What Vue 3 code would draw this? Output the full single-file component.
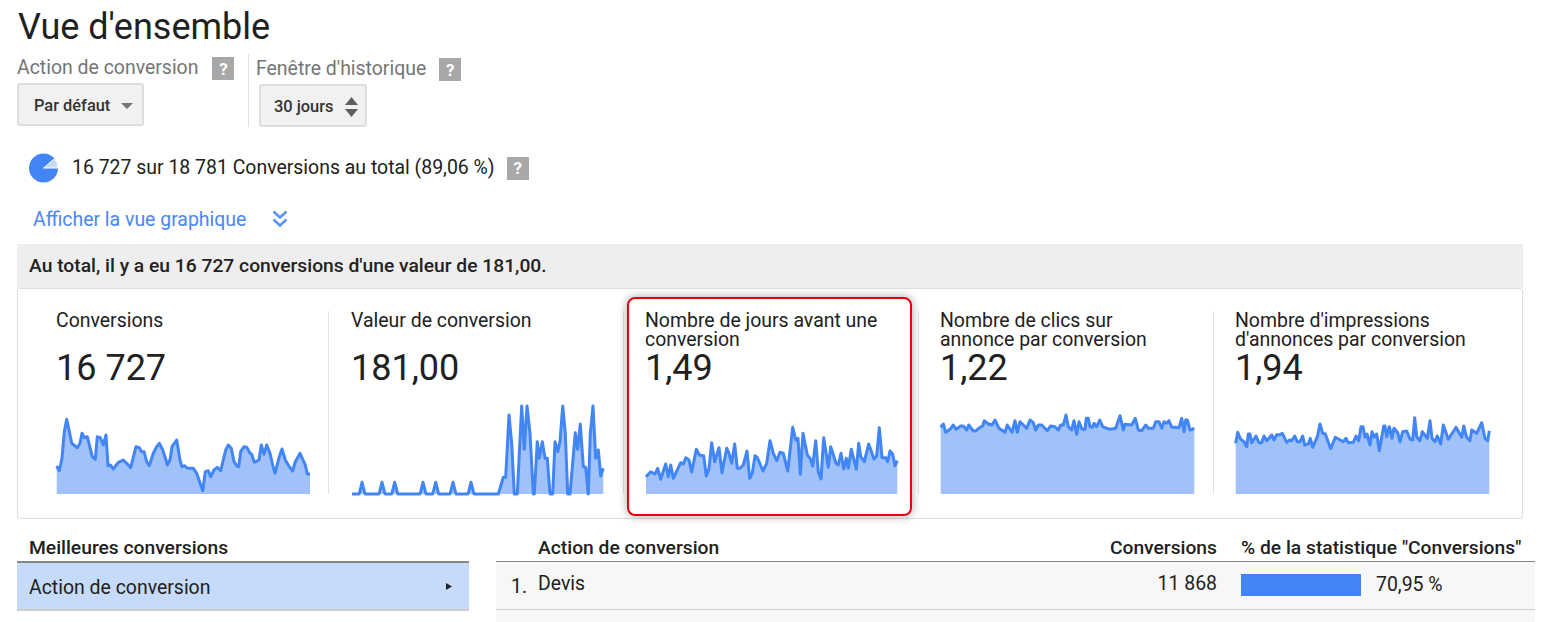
<script setup>
const raw = [
  { title: 'Conversions', value: '16 727', off: 20, left: 56,
    p: [110,198,118,212,126,175,133,95,140,58,147,90,155,130,172,143,180,130,186,100,193,113,202,110,217,170,226,178,232,110,241,113,250,135,258,105,264,197,271,195,280,207,295,187,310,180,320,190,332,203,348,140,358,143,365,155,372,155,380,185,388,197,400,160,410,140,418,130,428,150,438,180,442,195,450,180,456,140,470,120,480,180,486,200,494,197,502,205,520,205,530,220,548,272,556,215,565,212,572,230,582,210,592,202,602,212,617,150,625,135,634,145,642,185,650,197,656,200,662,155,672,140,680,142,690,160,695,163,703,187,717,180,724,135,732,163,740,135,750,160,758,195,765,220,778,170,786,147,796,180,808,200,818,213,826,185,840,160,856,195,862,222,870,222] },
  { title: 'Valeur de conversion', value: '181,00', off: 330, left: 351,
    p: [66,282,88,282,96,247,105,282,147,282,156,247,165,282,185,282,194,247,203,282,270,282,279,247,288,282,308,282,317,247,326,282,360,282,369,247,378,282,414,282,423,247,432,282,505,282,520,232,527,232,537,45,545,130,553,282,562,282,575,18,583,148,591,18,600,100,610,282,613,282,622,125,628,175,637,125,645,175,652,175,660,282,668,282,675,125,683,155,690,125,698,18,706,100,713,282,720,282,736,98,743,148,751,72,760,200,767,202,775,282,781,100,789,18,797,175,805,150,812,228,820,205] },
  { title: 'Nombre de jours avant une conversion', value: '1,49', off: 620, left: 646, top: 290, highlight: true,
    p: [78,560,92,545,105,552,113,535,122,568,137,522,145,560,152,525,160,565,182,518,190,522,197,503,207,510,215,546,229,478,238,495,251,498,259,558,267,535,275,458,284,515,297,473,306,548,320,475,327,490,335,520,344,462,352,535,360,535,370,525,381,483,389,565,397,550,405,497,412,503,429,543,440,520,450,452,460,490,470,512,480,487,490,490,503,543,518,412,527,450,534,445,541,553,549,430,562,495,570,505,578,528,587,452,595,545,603,567,611,443,625,532,632,470,648,520,655,525,663,490,671,537,679,505,685,535,694,478,709,538,716,460,722,500,733,515,746,462,762,507,770,497,778,413,786,503,797,503,803,515,810,483,818,493,825,527,832,512] },
  { title: 'Nombre de clics sur annonce par conversion', value: '1,22', off: 930, left: 941,
    p: [32,82,40,72,47,97,60,88,70,75,78,88,92,78,100,78,110,90,116,75,130,93,138,92,150,82,158,78,163,62,175,72,186,75,195,60,207,85,225,97,232,75,246,97,255,62,262,97,270,65,290,85,300,60,310,68,317,90,325,75,335,75,352,92,362,78,375,80,385,90,392,75,400,75,408,45,415,80,425,90,432,62,440,103,447,65,456,88,465,88,469,55,475,55,480,80,487,82,492,70,500,80,509,60,518,80,530,85,540,88,557,85,570,47,580,90,585,73,605,75,616,55,625,90,635,92,647,75,655,85,670,85,677,65,687,65,695,85,702,65,710,70,717,62,725,82,735,82,747,83,755,55,762,95,767,60,772,60,780,90,793,85] },
  { title: "Nombre d'impressions d'annonces par conversion", value: '1,94', off: 1220, left: 1236,
    p: [47,130,53,97,62,118,72,125,80,140,85,102,90,102,95,128,108,108,117,128,125,128,132,108,140,122,155,105,162,120,170,104,180,104,187,100,200,127,208,120,215,122,224,108,232,125,240,125,248,108,254,135,265,132,271,115,278,142,292,110,300,72,308,100,316,102,332,146,346,112,370,125,378,115,385,128,400,127,408,108,416,122,423,80,429,80,435,112,441,102,450,135,456,95,463,112,470,102,478,152,491,78,495,78,500,110,508,80,516,115,522,85,533,98,540,125,548,95,560,93,570,117,578,120,584,53,590,110,600,122,607,95,622,115,630,62,636,115,645,125,652,108,662,132,670,75,685,118,708,82,725,112,731,78,740,112,750,122,755,90,770,100,785,68,795,115,803,122,808,92] }
]

const cards = raw.map((c) => {
  const pts = []
  const top = c.top ?? 400
  for (let i = 0; i < c.p.length; i += 2) {
    const x = c.off + c.p[i] / 3 - c.left
    const y = top + c.p[i + 1] / 3 - 400
    pts.push([x.toFixed(1), y.toFixed(1)])
  }
  const line = pts.map((q) => q.join(',')).join(' ')
  const area = `${pts[0][0]},94 ${line} ${pts[pts.length - 1][0]},94`
  return { title: c.title, value: c.value, highlight: !!c.highlight, line, area }
})
</script>

<template>
  <main class="page">
    <h1 class="title">Vue d'ensemble</h1>

    <section class="filters">
      <div class="filter first">
        <div class="label-row">
          <span class="label">Action de conversion</span>
          <span class="help">?</span>
        </div>
        <button class="select">
          <span>Par défaut</span>
          <svg class="caret" width="12" height="6" viewBox="0 0 12 6"><path d="M0 0h12L6 6z" fill="#757575" /></svg>
        </button>
      </div>
      <div class="filter second">
        <div class="label-row">
          <span class="label">Fenêtre d'historique</span>
          <span class="help">?</span>
        </div>
        <button class="select select-days">
          <span>30 jours</span>
          <svg class="updown" width="13" height="20" viewBox="0 0 13 20"><path d="M6.5 0L13 8H0zM0 12h13l-6.5 8z" fill="#5f5f5f" /></svg>
        </button>
      </div>
    </section>

    <div class="total">
      <svg width="29" height="30" viewBox="0 0 29 30" class="pie">
        <circle cx="14.5" cy="15" r="14.5" fill="#4285f4" />
        <path d="M14.5 15L29 15A14.5 14.5 0 0 0 25.6 5.6z" fill="#c6daf9" stroke="#fff" stroke-width="1" />
      </svg>
      <span class="total-text">16 727 sur 18 781 Conversions au total (89,06 %)</span>
      <span class="help help-total">?</span>
    </div>

    <div class="graph-link">
      <a>Afficher la vue graphique</a>
      <svg width="16" height="18" viewBox="0 0 16 18" fill="none" stroke="#5b95f5" stroke-width="2.6">
        <path d="M1.5 1.5L8 7.5l6.5-6M1.5 9.5L8 15.5l6.5-6" />
      </svg>
    </div>

    <div class="summary">Au total, il y a eu 16 727 conversions d'une valeur de 181,00.</div>

    <section class="cards">
      <article v-for="c in cards" :key="c.title" class="card">
        <div v-if="c.highlight" class="red-box"></div>
        <div class="card-title">{{ c.title }}</div>
        <div class="card-value">{{ c.value }}</div>
        <svg class="spark" width="270" height="94" viewBox="0 0 270 94">
          <polygon :points="c.area" fill="#a0c2f9" />
          <polyline :points="c.line" fill="none" stroke="#4285f4" stroke-width="3" stroke-linejoin="round" />
        </svg>
      </article>
    </section>

    <section class="bottom">
      <div class="left-panel">
        <div class="head">Meilleures conversions</div>
        <div class="left-row">
          <span class="left-text">Action de conversion</span>
          <svg width="6" height="7" viewBox="0 0 6 7"><path d="M0 0l6 3.5L0 7z" fill="#222" /></svg>
        </div>
      </div>
      <div class="right-panel">
        <div class="table-row head-row">
          <span></span>
          <span>Action de conversion</span>
          <span class="num">Conversions</span>
          <span class="pct-head">% de la statistique "Conversions"</span>
        </div>
        <div class="table-row data-row">
          <span class="rank">1.</span>
          <span class="name">Devis</span>
          <span class="num">11 868</span>
          <span class="pct"><i class="bar"></i>70,95 %</span>
        </div>
        <div class="next-row"></div>
      </div>
    </section>
  </main>
</template>

<style>
html, body { margin: 0; background: #fff; overflow: hidden; }
</style>

<style scoped>
.page {
  width: 1548px;
  height: 622px;
  overflow: hidden;
  padding-left: 17px;
  box-sizing: border-box;
  font-family: Roboto, "Liberation Sans", sans-serif;
  color: #212121;
  font-size: 19.45px;
}
.title {
  margin: 0;
  height: 54px;
  line-height: 54px;
  font-size: 36px;
  font-weight: 400;
  color: #212121;
  padding-left: 1px;
}
.filters {
  display: flex;
  height: 73px;
}
.filter.first {
  width: 231px;
  border-right: 1px solid #e0e0e0;
}
.filter.second {
  padding-left: 7px;
}
.label-row {
  display: flex;
  align-items: center;
  height: 29px;
}
.second .label-row { padding-top: 1px; }
.first .help { margin-left: 14px; }
.label { color: #757575; padding-bottom: 2px; }
.help {
  display: inline-flex;
  align-items: center;
  justify-content: center;
  width: 22px;
  height: 23px;
  background: #a8a8a8;
  color: #fff;
  font-size: 17px;
  font-weight: 700;
  margin-left: 13px;
}
.select {
  display: inline-flex;
  align-items: center;
  height: 43px;
  padding: 2px 9px 0 15px;
  margin: 0;
  border: 2px solid #ddd;
  border-radius: 3px;
  background: #f1f1f1;
  font-family: inherit;
  font-size: 16.4px;
  font-weight: 500;
  color: #333;
  box-sizing: border-box;
  width: 127px;
  justify-content: space-between;
}
.select-days {
  width: 108px;
  margin-left: 3px;
  padding-left: 13px;
  padding-right: 7px;
}
.total {
  display: flex;
  align-items: center;
  height: 30px;
  margin-top: 26px;
  padding-left: 12px;
}
.total-text { padding-bottom: 2px; }
.pie { margin-right: 14px; flex: none; }
.help-total { margin-left: 12px; }
.graph-link {
  display: flex;
  align-items: center;
  height: 26px;
  margin-top: 23px;
  padding-left: 16px;
  color: #4a86f5;
  gap: 26px;
}
.summary {
  width: 1506px;
  height: 44px;
  margin-top: 12px;
  line-height: 43px;
  padding-left: 12px;
  box-sizing: border-box;
  background: #eee;
  font-weight: 500;
  font-size: 19.25px;
  color: #222;
}
.cards {
  display: flex;
  width: 1506px;
  height: 231px;
  box-sizing: border-box;
  border: 1px solid #ddd;
  border-radius: 3px;
  padding: 22px 0 0 16px;
}
.card {
  position: relative;
  width: 295px;
  height: 183px;
  box-sizing: border-box;
  padding-left: 21px;
  border-right: 1px solid #e4e4e4;
  flex: none;
}
.card:nth-child(-n+2) { padding-left: 22px; }
.card:last-child { border-right: 0; }
.red-box {
  position: absolute;
  left: 3px;
  top: -14px;
  width: 285px;
  height: 219px;
  box-sizing: border-box;
  border: 2px solid #e8000f;
  border-radius: 8px;
  box-shadow: 0 0 10px rgba(0, 0, 0, .35);
  pointer-events: none;
}
.card-title {
  height: 38px;
  line-height: 19px;
  width: 245px;
}
.card-value {
  height: 38px;
  line-height: 38px;
  font-size: 36px;
}
.spark {
  display: block;
  margin-top: 13px;
  overflow: visible;
}
.card:nth-child(n+3) .spark { margin-left: 1px; }
.bottom {
  display: flex;
  margin-top: 16px;
  gap: 27px;
}
.left-panel { width: 452px; flex: none; }
.head {
  height: 26px;
  line-height: 25px;
  padding-left: 12px;
  font-weight: 500;
  font-size: 19.25px;
}
.left-row {
  display: flex;
  align-items: center;
  justify-content: space-between;
  height: 50px;
  box-sizing: border-box;
  padding: 0 17px 0 12px;
  background: #c6daf9;
  border-top: 2px solid #888;
  border-bottom: 2px solid #ccc;
}
.left-text { padding-top: 2px; }
.right-panel { width: 1039px; flex: none; }
.table-row {
  display: grid;
  grid-template-columns: 42px 500px 179px 1fr;
  align-items: center;
}
.head-row {
  height: 26px;
  line-height: 25px;
  font-weight: 500;
  font-size: 19.25px;
  border-bottom: 1px solid #888;
  align-items: start;
}
.num { text-align: right; }
.pct-head, .pct { padding-left: 24px; white-space: nowrap; }
.data-row {
  height: 48px;
  background: #f7f7f7;
  border-bottom: 1px solid #ccc;
  box-sizing: border-box;
  align-items: start;
  padding-top: 9px;
}
.rank { padding-left: 15px; padding-top: 4px; }
.name { padding-top: 1px; }
.data-row .num { padding-top: 1px; }
.pct { display: flex; align-items: center; padding-top: 2px; }
.bar {
  display: block;
  width: 120px;
  height: 22px;
  background: #4285f4;
  margin-right: 15px;
}
.next-row { height: 14px; background: #f7f7f7; }
</style>
